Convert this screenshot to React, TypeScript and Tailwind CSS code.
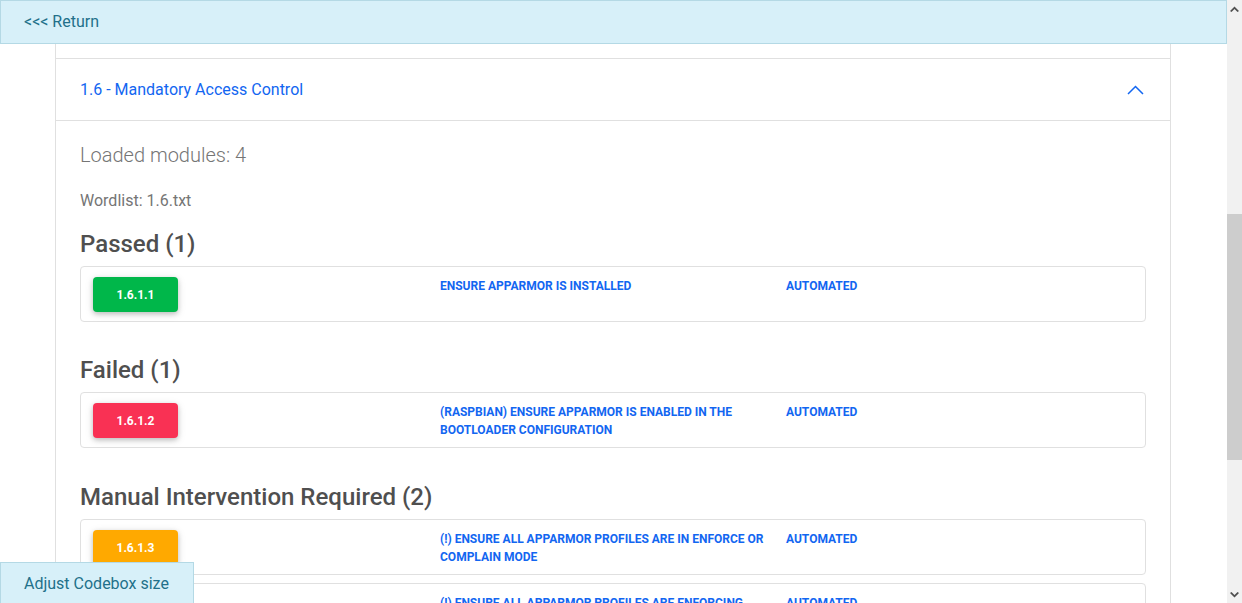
import React from "react";

type Row = { id: string; color: string; desc: string; kind: string };

const passed: Row[] = [{ id: "1.6.1.1", color: "bg-[#00b74a]", desc: "Ensure AppArmor is installed", kind: "Automated" }];
const failed: Row[] = [
  { id: "1.6.1.2", color: "bg-[#f93154]", desc: "(Raspbian) Ensure AppArmor is enabled in the bootloader configuration", kind: "Automated" },
];
const manual: Row[] = [
  { id: "1.6.1.3", color: "bg-[#ffa900]", desc: "(!) Ensure all AppArmor Profiles are in enforce or complain mode", kind: "Automated" },
  { id: "1.6.1.4", color: "bg-[#ffa900]", desc: "(!) Ensure all AppArmor Profiles are enforcing", kind: "Automated" },
];

function ResultRow({ r }: { r: Row }) {
  return (
    <div className="flex h-[56px] items-start rounded-[4px] border border-[#e0e0e0] pt-[10px]">
      <div className="w-[359px] shrink-0 pl-[12px]">
        <div
          className={`flex h-[35px] w-[85px] items-center justify-center rounded-[4px] ${r.color} text-[12px] font-bold text-white shadow-[0_2px_5px_0_rgba(0,0,0,0.2),0_2px_10px_0_rgba(0,0,0,0.1)]`}
        >
          {r.id}
        </div>
      </div>
      <div className="w-[346px] shrink-0 pr-[16px] text-[12px] font-bold uppercase leading-[18px] text-[#1266f1]">{r.desc}</div>
      <div className="text-[12px] font-bold uppercase leading-[18px] text-[#1266f1]">{r.kind}</div>
    </div>
  );
}

function Section({ title, rows, mt }: { title: string; rows: Row[]; mt: string }) {
  return (
    <div className={mt}>
      <h4 className="mb-[7px] text-[24px] font-medium leading-[29px] text-[#4f4f4f]">{title}</h4>
      <div className="flex flex-col gap-[8px]">
        {rows.map((r) => (
          <ResultRow key={r.id} r={r} />
        ))}
      </div>
    </div>
  );
}

export default function App() {
  return (
    <div
      className="relative flex h-[603px] w-[1242px] overflow-hidden bg-white"
      style={{ fontFamily: "Roboto, 'Liberation Sans', sans-serif" }}
    >
      <div className="flex w-[1227px] shrink-0 flex-col">
        <div className="flex h-[44px] shrink-0 items-center border border-[#b4d9e5] bg-[#d7f0f9] pl-[23px] text-[16px] text-[#22708a]">
          &lt;&lt;&lt; Return
        </div>
        <div className="ml-[55px] mr-[56px] flex-1 border-x border-[#e0e0e0]">
          <div className="h-[15px] border-b border-[#e0e0e0]" />
          <div className="flex h-[62px] items-center justify-between border-b border-[#e0e0e0] pl-[24px] pr-[26px]">
            <span className="text-[16px] text-[#1266f1]">1.6 - Mandatory Access Control</span>
            <svg width="17" height="10" viewBox="0 0 17 10" fill="none">
              <polyline points="1,9 8.5,1.5 16,9" stroke="#1266f1" strokeWidth="1.5" />
            </svg>
          </div>
          <div className="px-[24px] pt-[19px]">
            <div className="text-[20px] font-light leading-[30px] text-[#757575]">Loaded modules: 4</div>
            <div className="mt-[19px] text-[16px] leading-[24px] text-[#757575]">Wordlist: 1.6.txt</div>
            <div className="mt-[17px]">
              <Section title="Passed (1)" rows={passed} mt="mt-0" />
              <Section title="Failed (1)" rows={failed} mt="mt-[34px]" />
              <Section title="Manual Intervention Required (2)" rows={manual} mt="mt-[35px]" />
            </div>
          </div>
        </div>
      </div>
      <div className="flex w-[15px] shrink-0 flex-col bg-[#f1f1f1]">
        <div className="flex h-[17px] items-center justify-center">
          <svg width="9" height="6" viewBox="0 0 9 6">
            <polygon points="0,5 4.5,0.5 9,5 7.5,6 4.5,3 1.5,6" fill="#505050" />
          </svg>
        </div>
        <div className="h-[197px]" />
        <div className="h-[246px] bg-[#cdcdcd]" />
        <div className="flex-1" />
        <div className="flex h-[17px] items-center justify-center">
          <svg width="9" height="6" viewBox="0 0 9 6">
            <polygon points="0,1 4.5,5.5 9,1 7.5,0 4.5,3 1.5,0" fill="#505050" />
          </svg>
        </div>
      </div>
      <div className="absolute bottom-[-2px] left-0 flex h-[43px] w-[194px] items-center border border-[#b4d9e5] bg-[#d7f0f9] pl-[23px] text-[16px] text-[#22708a]">
        Adjust Codebox size
      </div>
    </div>
  );
}
